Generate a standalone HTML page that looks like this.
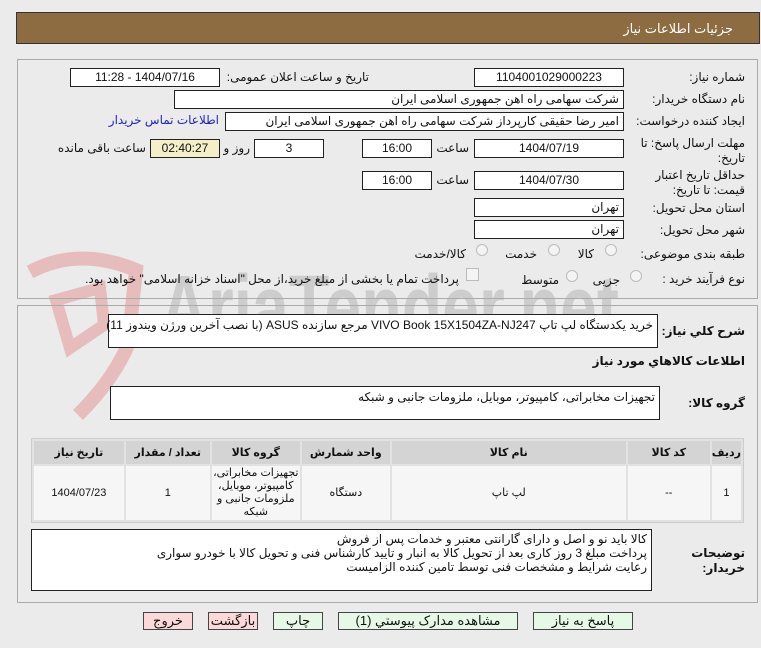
<!DOCTYPE html>
<html><head><meta charset="utf-8"><style>
*{box-sizing:border-box;margin:0;padding:0}
body{width:761px;height:648px;background:#ebebeb;font-family:"Liberation Sans","DejaVu Sans",sans-serif;font-size:12px;color:#111;position:relative;overflow:hidden;direction:rtl}
.a{position:absolute;white-space:nowrap}
.box{position:absolute;background:#fff;border:1px solid #222;height:19px;line-height:17px;padding:0 4px;text-align:center;white-space:nowrap;font-size:12px}
.r{text-align:right}
.lbl{position:absolute;white-space:nowrap;text-align:right;font-size:12px}
.panel{position:absolute;border:1px solid #aaa}
.rad{position:absolute;width:12px;height:12px;border:1px solid #bbb;border-radius:50%;background:#f4f4f4}
.btn{position:absolute;height:18px;border:1px solid #444;line-height:16px;text-align:center;font-size:13px}
table{border-collapse:separate;border-spacing:2px;position:absolute;background:#e2e2e2;border:1px solid #ccc}
th{background:#d4d4d4;font-weight:bold;height:23px;font-size:11px;padding:0}
td{background:#f6f6f6;text-align:center;height:54px;font-size:11px;line-height:13px;padding:0}
</style></head><body>
<div class="a" style="left:16px;top:12px;width:744px;height:32px;background:#8c6c40;border:1px solid #333"></div>
<div class="a" style="right:28px;top:21px;color:#fff;font-size:13px">جزئیات اطلاعات نیاز</div>

<svg class="a" style="left:18px;top:250px" width="130" height="170" viewBox="0 0 130 170"><path d="M12 22 Q60 -4 118 20 L110 95 Q95 130 60 165" fill="none" stroke="#e6bcbc" stroke-width="14"/><path d="M38 50 L82 38 L86 75 L52 98 Z" fill="none" stroke="#e6bcbc" stroke-width="12"/></svg>
<div class="a" style="left:160px;top:258px;font-size:92px;line-height:100px;font-weight:bold;color:#cdcdcd;direction:ltr;transform:scaleX(0.72);transform-origin:left top">AriaTender.net</div>

<div class="panel" style="left:17px;top:59px;width:741px;height:240px"></div>
<div class="panel" style="left:17px;top:305px;width:741px;height:298px"></div>

<div class="lbl" style="right:16px;top:70px">شماره نیاز:</div>
<div class="box" style="left:474px;top:68px;width:150px">1104001029000223</div>
<div class="lbl" style="right:392px;top:70px">تاریخ و ساعت اعلان عمومی:</div>
<div class="box" style="left:70px;top:68px;width:150px">1404/07/16 - 11:28</div>

<div class="lbl" style="right:16px;top:92px">نام دستگاه خریدار:</div>
<div class="box r" style="left:174px;top:90px;width:450px">شرکت سهامی راه اهن جمهوری اسلامی ایران</div>

<div class="lbl" style="right:16px;top:114px">ایجاد کننده درخواست:</div>
<div class="box r" style="left:225px;top:112px;width:399px">امیر رضا  حقیقی کارپرداز شرکت سهامی راه اهن جمهوری اسلامی ایران</div>
<div class="lbl" style="right:542px;top:113px;color:#2222cc">اطلاعات تماس خریدار</div>

<div class="lbl" style="right:16px;top:136px;line-height:15px;width:120px;white-space:normal">مهلت ارسال پاسخ: تا تاریخ:</div>
<div class="box" style="left:474px;top:139px;width:150px">1404/07/19</div>
<div class="lbl" style="right:292px;top:141px">ساعت</div>
<div class="box" style="left:362px;top:139px;width:70px">16:00</div>
<div class="box" style="left:254px;top:139px;width:70px">3</div>
<div class="lbl" style="right:511px;top:141px">روز و</div>
<div class="box" style="left:150px;top:139px;width:70px;background:#f3efc9">02:40:27</div>
<div class="lbl" style="right:615px;top:141px">ساعت باقی مانده</div>

<div class="lbl" style="right:16px;top:168px;line-height:15px;width:100px;white-space:normal">حداقل تاریخ اعتبار قیمت: تا تاریخ:</div>
<div class="box" style="left:474px;top:171px;width:150px">1404/07/30</div>
<div class="lbl" style="right:292px;top:173px">ساعت</div>
<div class="box" style="left:362px;top:171px;width:70px">16:00</div>

<div class="lbl" style="right:16px;top:201px">استان محل تحویل:</div>
<div class="box r" style="left:474px;top:198px;width:150px">تهران</div>
<div class="lbl" style="right:16px;top:223px">شهر محل تحویل:</div>
<div class="box r" style="left:474px;top:220px;width:150px">تهران</div>

<div class="lbl" style="right:16px;top:247px">طبقه بندی موضوعی:</div>
<div class="rad" style="left:605px;top:244px"></div><div class="lbl" style="right:167px;top:247px">کالا</div>
<div class="rad" style="left:548px;top:244px"></div><div class="lbl" style="right:224px;top:247px">خدمت</div>
<div class="rad" style="left:476px;top:244px"></div><div class="lbl" style="right:295px;top:247px">کالا/خدمت</div>

<div class="lbl" style="right:16px;top:272px">نوع فرآیند خرید :</div>
<div class="rad" style="left:630px;top:270px"></div><div class="lbl" style="right:141px;top:273px">جزیی</div>
<div class="rad" style="left:566px;top:270px"></div><div class="lbl" style="right:202px;top:273px">متوسط</div>
<div class="a" style="left:466px;top:268px;width:13px;height:13px;border:1px solid #bbb;background:#f4f4f4"></div>
<div class="lbl" style="right:302px;top:272px">پرداخت تمام یا بخشی از مبلغ خرید،از محل "اسناد خزانه اسلامی" خواهد بود.</div>

<div class="lbl" style="right:16px;top:324px;font-weight:bold">شرح کلي نیاز:</div>
<div class="box r" style="left:108px;top:314px;width:550px;height:34px;line-height:16px;text-align:right;padding-top:2px">خرید یکدستگاه لپ تاپ VIVO Book 15X1504ZA-NJ247 مرجع سازنده ASUS (با نصب آخرین ورژن ویندوز 11)</div>

<div class="lbl" style="right:16px;top:354px;font-weight:bold">اطلاعات کالاهاي مورد نیاز</div>
<div class="lbl" style="right:16px;top:396px;font-weight:bold">گروه کالا:</div>
<div class="box r" style="left:110px;top:386px;width:550px;height:34px;line-height:16px;text-align:right;padding-top:2px">تجهیزات مخابراتی، کامپیوتر، موبایل، ملزومات جانبی و شبکه</div>

<table style="left:31px;top:438px;width:713px">
<tr><th style="width:27px">ردیف</th><th style="width:82px">کد کالا</th><th style="width:234px">نام کالا</th><th style="width:88px">واحد شمارش</th><th style="width:88px">گروه کالا</th><th style="width:84px">تعداد / مقدار</th><th>تاریخ نیاز</th></tr>
<tr><td>1</td><td>--</td><td>لپ تاپ</td><td>دستگاه</td><td>تجهیزات مخابراتی، کامپیوتر، موبایل، ملزومات جانبی و شبکه</td><td>1</td><td>1404/07/23</td></tr>
</table>

<div class="lbl" style="right:16px;top:546px;font-weight:bold;line-height:15px;width:60px;white-space:normal">توضیحات خریدار:</div>
<div class="box r" style="left:31px;top:529px;width:621px;height:62px;line-height:14px;text-align:right;white-space:normal;padding-top:2px">کالا باید نو و اصل و دارای گارانتی معتبر و خدمات پس از فروش<br>پرداخت مبلغ 3 روز کاری  بعد از تحویل کالا به انبار و تایید کارشناس فنی و تحویل کالا با خودرو سواری<br>رعایت شرایط و مشخصات فنی توسط تامین کننده الزامیست</div>

<div class="btn" style="left:533px;top:612px;width:100px;background:#e6f9e6">پاسخ به نیاز</div>
<div class="btn" style="left:338px;top:612px;width:180px;background:#e6f9e6">مشاهده مدارک پیوستي (1)</div>
<div class="btn" style="left:273px;top:612px;width:50px;background:#e6f9e6">چاپ</div>
<div class="btn" style="left:208px;top:612px;width:50px;background:#fbd9d9">بازگشت</div>
<div class="btn" style="left:143px;top:612px;width:50px;background:#fbd9d9">خروج</div>
</body></html>
